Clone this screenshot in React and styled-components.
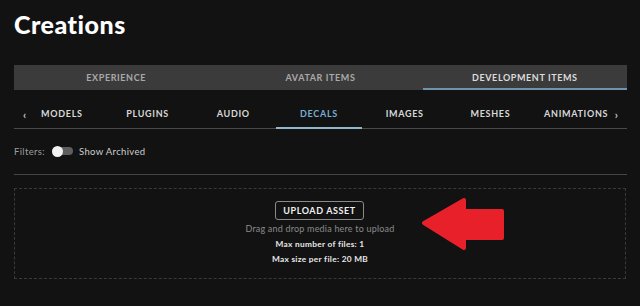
import React from "react";
import styled, { createGlobalStyle } from "styled-components";

const Global = createGlobalStyle`
  html, body { margin: 0; padding: 0; background: #121212; }
  body { font-family: "Lato", "Liberation Sans", sans-serif; color: #fff; }
  * { box-sizing: border-box; }
`;

const Page = styled.div`
  width: 640px;
  height: 306px;
  padding: 0 13px 0 14px;
  overflow: hidden;
  background: #121212;
`;

const Title = styled.h1`
  margin: 0;
  padding-top: 10px;
  height: 65px;
  font-size: 25px;
  line-height: 28px;
  font-weight: 900;
  letter-spacing: 0.5px;
  color: #fff;
`;

const TopTabs = styled.div`
  display: grid;
  grid-template-columns: repeat(3, 1fr);
  height: 25px;
  background: #3b3b3b;
`;

const TopTab = styled.div`
  display: flex;
  align-items: center;
  justify-content: center;
  font-size: 9px;
  font-weight: 700;
  letter-spacing: 0.6px;
  color: ${(p) => (p.$active ? "#dcdcdc" : "#a9a9a9")};
  border-bottom: 2px solid ${(p) => (p.$active ? "#6f95ad" : "transparent")};
  padding-top: 2px;
`;

const SubTabs = styled.div`
  position: relative;
  margin-top: 10px;
  height: 29px;
  border-bottom: 1px solid #4a4a4a;
  padding: 0 8px 0 5px;
  display: grid;
  grid-template-columns: repeat(7, 1fr);
`;

const SubTab = styled.div`
  display: flex;
  align-items: center;
  justify-content: center;
  font-size: 9px;
  font-weight: 700;
  letter-spacing: 0.7px;
  color: ${(p) => (p.$active ? "#78aed4" : "#d8d8d8")};
  border-bottom: 2px solid ${(p) => (p.$active ? "#8fb7c9" : "transparent")};
  margin-bottom: -1px;
`;

const Chevron = styled.span`
  position: absolute;
  top: 0;
  bottom: 0;
  ${(p) => (p.$side === "left" ? "left: 9px;" : "right: 9px;")}
  display: flex;
  align-items: center;
  color: #c4c4c4;
  font-size: 11px;
  font-weight: 700;
`;

const FilterRow = styled.div`
  display: flex;
  align-items: center;
  height: 46px;
  border-bottom: 1px solid #464646;
  padding-bottom: 1px;
  font-size: 9.5px;
  letter-spacing: 0.35px;
`;

const FilterLabel = styled.span`
  color: #9d9d9d;
`;

const Toggle = styled.span`
  position: relative;
  display: inline-block;
  width: 20px;
  height: 8px;
  border-radius: 4px;
  background: #5e5e5e;
  margin: 0 6px 0 8px;
`;

const Knob = styled.span`
  position: absolute;
  left: -1px;
  top: -1.5px;
  width: 11px;
  height: 11px;
  border-radius: 50%;
  background: #f2f2f2;
`;

const ToggleLabel = styled.span`
  color: #cfcfcf;
`;

const DropZone = styled.div`
  position: relative;
  margin-top: 13px;
  height: 91px;
  margin-right: 1px;
  border: 1px dashed #3a3a3a;
  display: flex;
  flex-direction: column;
  align-items: center;
  padding-top: 12px;
`;

const UploadButton = styled.button`
  height: 19px;
  width: 89px;
  border: 1px solid #8a8a8a;
  border-radius: 3px;
  background: transparent;
  color: #f0f0f0;
  font-family: inherit;
  font-size: 9px;
  font-weight: 700;
  letter-spacing: 0.6px;
  padding: 0;
  margin-right: 1px;
`;

const Hint = styled.div`
  margin-top: 3px;
  font-size: 9px;
  line-height: 12px;
  color: #8a8a8a;
  letter-spacing: 0.2px;
`;

const Info = styled.div`
  margin-top: 3px;
  font-size: 8.3px;
  line-height: 12px;
  font-weight: 700;
  color: #e8e8e8;
  letter-spacing: 0.3px;
`;

const Arrow = styled.svg`
  position: absolute;
  left: 406px;
  top: 8px;
`;

export default function App() {
  const subTabs = ["MODELS", "PLUGINS", "AUDIO", "DECALS", "IMAGES", "MESHES", "ANIMATIONS"];
  return (
    <>
      <Global />
      <Page>
        <Title>Creations</Title>
        <TopTabs>
          <TopTab>EXPERIENCE</TopTab>
          <TopTab>AVATAR ITEMS</TopTab>
          <TopTab $active>DEVELOPMENT ITEMS</TopTab>
        </TopTabs>
        <SubTabs>
          <Chevron $side="left">‹</Chevron>
          {subTabs.map((t) => (
            <SubTab key={t} $active={t === "DECALS"}>
              {t}
            </SubTab>
          ))}
          <Chevron $side="right">›</Chevron>
        </SubTabs>
        <FilterRow>
          <FilterLabel>Filters:</FilterLabel>
          <Toggle>
            <Knob />
          </Toggle>
          <ToggleLabel>Show Archived</ToggleLabel>
        </FilterRow>
        <DropZone>
          <UploadButton>UPLOAD ASSET</UploadButton>
          <Hint>Drag and drop media here to upload</Hint>
          <Info>Max number of files: 1</Info>
          <Info>Max size per file: 20 MB</Info>
          <Arrow width="84" height="54" viewBox="0 0 84 54">
            <path
              d="M3 26 L43 3 L43 14 L81 14 L81 41 L43 41 L43 51 Z"
              fill="#e8202a"
              stroke="#e8202a"
              strokeWidth="4"
              strokeLinejoin="round"
            />
          </Arrow>
        </DropZone>
      </Page>
    </>
  );
}
